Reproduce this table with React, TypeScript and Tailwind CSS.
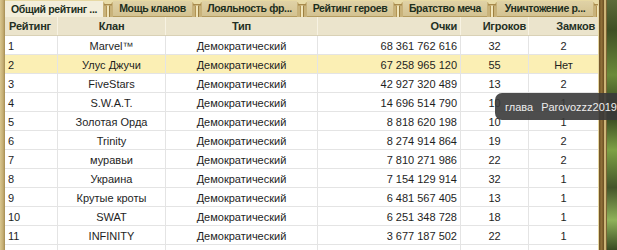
import React from 'react';

interface ClanRow {
    rank: number;
    name: string;
    kind: string;
    points: string;
    players: number;
    castles: string;
}

const rows: ClanRow[] = [
    { rank: 1, name: 'Marvel™', kind: 'Демократический', points: '68 361 762 616', players: 32, castles: '2' },
    { rank: 2, name: 'Улус Джучи', kind: 'Демократический', points: '67 258 965 120', players: 55, castles: 'Нет' },
    { rank: 3, name: 'FiveStars', kind: 'Демократический', points: '42 927 320 489', players: 13, castles: '2' },
    { rank: 4, name: 'S.W.A.T.', kind: 'Демократический', points: '14 696 514 790', players: 10, castles: '1' },
    { rank: 5, name: 'Золотая Орда', kind: 'Демократический', points: '8 818 620 198', players: 10, castles: '1' },
    { rank: 6, name: 'Trinity', kind: 'Демократический', points: '8 274 914 864', players: 19, castles: '2' },
    { rank: 7, name: 'муравьи', kind: 'Демократический', points: '7 810 271 986', players: 22, castles: '2' },
    { rank: 8, name: 'Украина', kind: 'Демократический', points: '7 154 129 914', players: 32, castles: '1' },
    { rank: 9, name: 'Крутые кроты', kind: 'Демократический', points: '6 481 567 405', players: 13, castles: '1' },
    { rank: 10, name: 'SWAT', kind: 'Демократический', points: '6 251 348 728', players: 18, castles: '1' },
    { rank: 11, name: 'INFINITY', kind: 'Демократический', points: '3 677 187 502', players: 22, castles: '1' },
    { rank: 12, name: '', kind: '', points: '', players: 0, castles: '' },
];

const tabs = [
    { label: 'Общий рейтинг ...', w: 'w-[98px]', active: true },
    { label: 'Мощь кланов', w: 'w-[79px]', active: false },
    { label: 'Лояльность фр...', w: 'w-[95px]', active: false },
    { label: 'Рейтинг героев', w: 'w-[86px]', active: false },
    { label: 'Братство меча', w: 'w-[84px]', active: false },
    { label: 'Уничтожение р...', w: 'w-[96px]', active: false },
];

// golden column between tabs
const Pillar: React.FC<{ narrow?: boolean }> = ({ narrow }) => (
    <svg width={narrow ? 5 : 10} height="17" viewBox={narrow ? '0 0 5 17' : '0 0 10 17'} className="shrink-0 block">
        <rect x="0" y="0" width="10" height="17" fill="#c8b27a" />
        <path d="M0 0h10v2c-1 0-2 1-2 2H2c0-1-1-2-2-2z" fill="#e9dca8" />
        <path d="M1 4h8v1.5H1z" fill="#a88a4c" />
        <rect x="3" y="5.5" width="4" height="11.5" fill="#f1e6bb" />
        <rect x="3" y="5.5" width="1" height="11.5" fill="#b39452" />
        <rect x="6" y="5.5" width="1" height="11.5" fill="#9c7f40" />
    </svg>
);

const cols = 'grid grid-cols-[53px_108px_152px_143px_68px_69px]';

export default function App() {
    return (
        <div className="relative w-[617px] h-[250px] overflow-hidden flex bg-white font-['Liberation_Sans',Arial,sans-serif] text-[11px] text-[#1e1e1e]">
            <div className="w-[5px] shrink-0 bg-[linear-gradient(90deg,#d9c68f_0,#c4ad73_60%,#a58c52_100%)]" />

            <div className="w-[593px] shrink-0 flex flex-col">
                <div className="h-[17px] flex bg-[#c8b27a]">
                    {tabs.map((t, i) => (
                        <React.Fragment key={t.label}>
                            <div
                                className={`${t.w} shrink-0 flex items-center justify-center font-bold whitespace-nowrap text-[10.5px] tracking-[-0.35px] text-[#1d2e1d] border-t border-[#e7d9a4] ${
                                    t.active ? 'bg-[#f3eedb] pt-[2px]' : 'bg-[linear-gradient(180deg,#e0d2a6,#d3c291)] border-b border-b-[#b49b5e] pt-[1px]'
                                }`}
                            >
                                {t.label}
                            </div>
                            <Pillar narrow={i === tabs.length - 1} />
                        </React.Fragment>
                    ))}
                </div>

                <div className={`${cols} h-[20px] bg-[#ebe4cc] border-b border-[#d9d1b6] font-bold text-[#243024] tracking-[-0.2px]`}>
                    <div className="flex items-center justify-end pt-[1px] pr-[6px] border-r border-[#f7f2e2]">Рейтинг</div>
                    <div className="flex items-center justify-center pt-[1px] border-r border-[#f7f2e2]">Клан</div>
                    <div className="flex items-center justify-center pt-[1px] border-r border-[#f7f2e2]">Тип</div>
                    <div className="flex items-center justify-end pt-[1px] pr-[3px] border-r border-[#f7f2e2]">Очки</div>
                    <div className="flex items-center justify-end pt-[1px] pr-[2px] border-r border-[#f7f2e2]">Игроков</div>
                    <div className="flex items-center justify-end pt-[1px] pr-[3px]">Замков</div>
                </div>

                {rows.map((r) => (
                    <div
                        key={r.rank}
                        className={`${cols} h-[19px] shrink-0 border-b border-[#e4e4e4] ${r.rank === 2 ? 'bg-[#fbefb4]' : 'bg-white'}`}
                    >
                        <div className="flex items-center pt-[2px] pl-[3px] border-r border-[#e4e4e4]">{r.name ? r.rank : ''}</div>
                        <div className="flex items-center justify-center pt-[2px] border-r border-[#e4e4e4] whitespace-nowrap">{r.name}</div>
                        <div className="flex items-center justify-center pt-[2px] border-r border-[#e4e4e4]">{r.kind}</div>
                        <div className="flex items-center justify-end pt-[2px] pr-[3px] border-r border-[#e4e4e4]">{r.points}</div>
                        <div className="flex items-center justify-center pt-[2px] border-r border-[#e4e4e4]">{r.name ? r.players : ''}</div>
                        <div className="flex items-center justify-center pt-[2px]">{r.castles}</div>
                    </div>
                ))}
            </div>

            <div className="w-[19px] shrink-0 flex">
                <div className="w-px bg-[#e6d7a2]" />
                <div className="w-[5px] bg-[linear-gradient(90deg,#6f5225,#8e6f38_50%,#6a4e22)]" />
                <div className="w-[2px] bg-[#cdb577]" />
                <div className="w-px bg-[#7a6334]" />
                <div className="flex-1 bg-[linear-gradient(180deg,#5d6b3a_0,#3f4f24_12%,#6b8a3a_30%,#2f3d1c_45%,#7da145_60%,#44552a_75%,#8fb25a_88%,#3a4a22_100%)]" />
            </div>

            <div className="absolute left-[495px] top-[93px] h-[27px] w-[140px] rounded-[7px] bg-[#3a3a3a]/90 flex items-center pl-[10px] gap-[8px] pt-[1px] text-[#ececec] whitespace-nowrap">
                <span>глава</span>
                <span>Parovozzz2019</span>
            </div>
        </div>
    );
}
